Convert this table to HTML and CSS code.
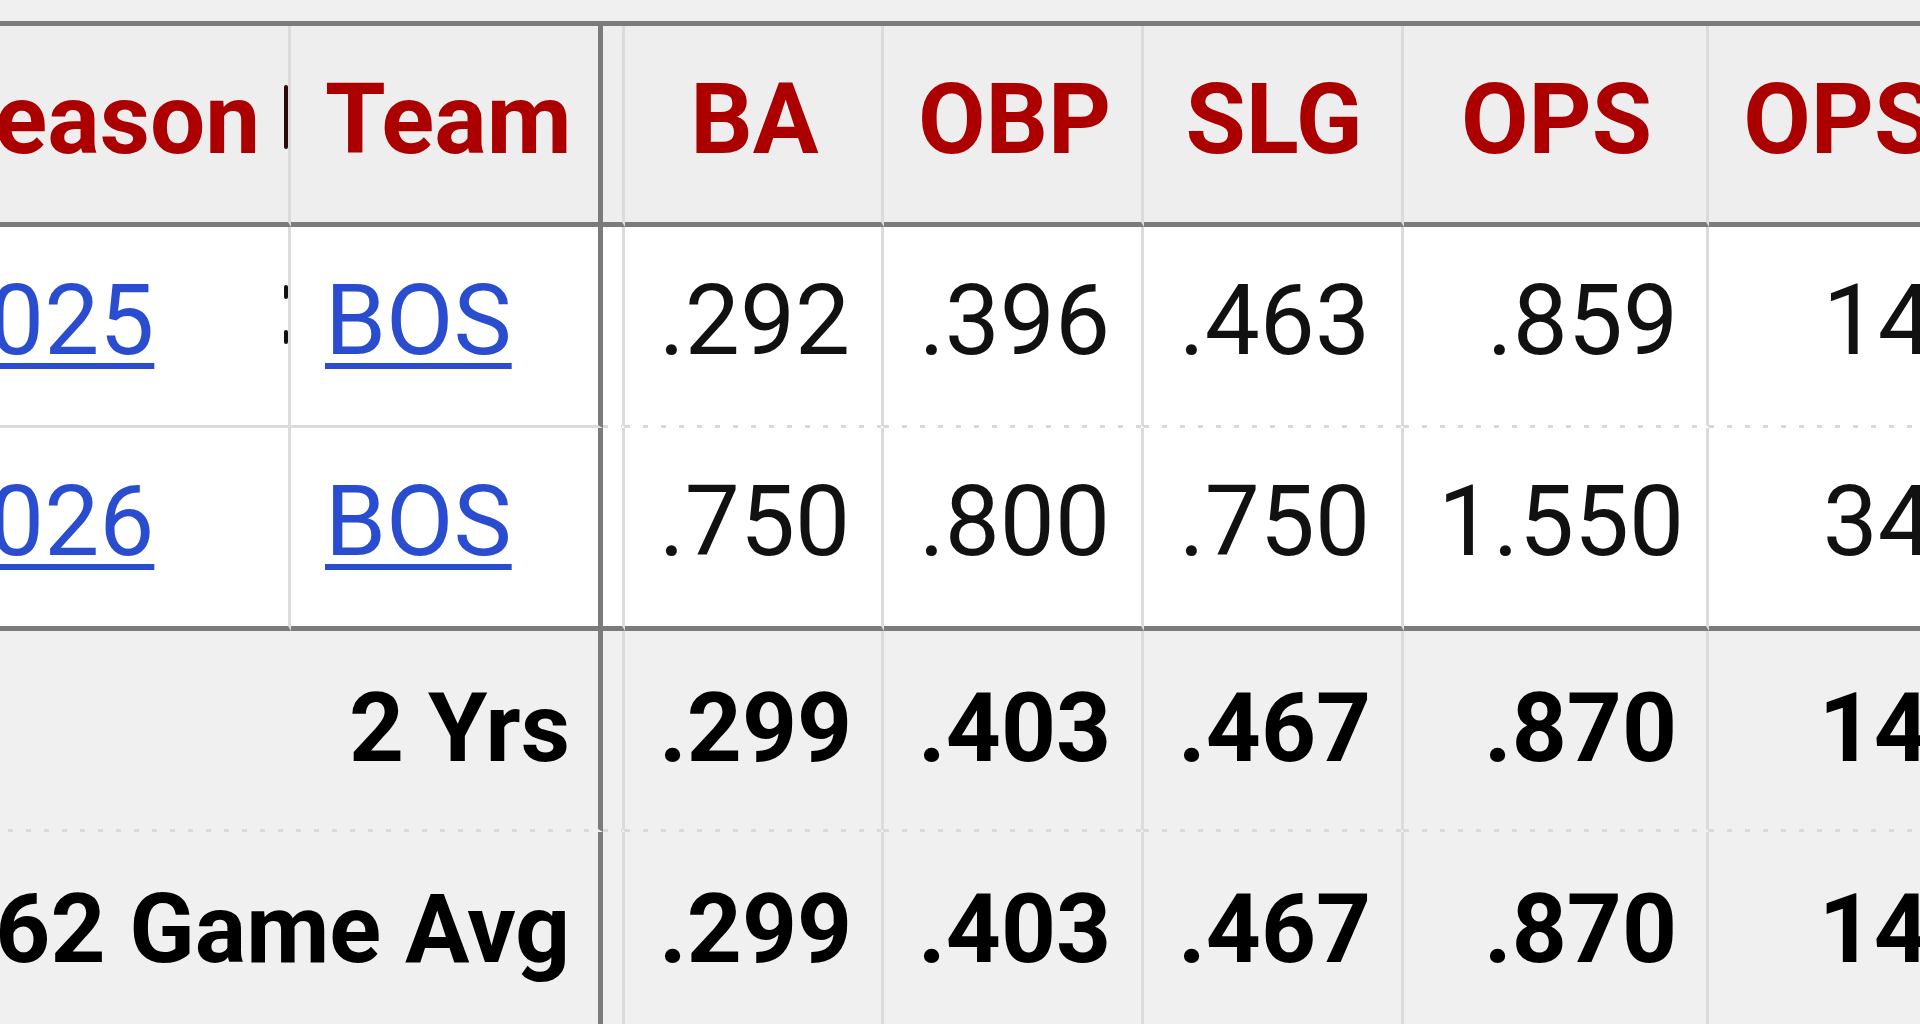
FILE: index.html
```html
<!DOCTYPE html>
<html lang="en">
<head>
    <meta charset="UTF-8">
    <meta name="viewport" content="width=device-width, initial-scale=1.0">
    <title>Standard Batting</title>
    <link rel="stylesheet" href="styles.css">
</head>
<body>
    <div class="scroller">
        <table class="stats">
            <colgroup>
                <col class="c-season">
                <col class="c-team">
                <col class="c-gap">
                <col class="c-ba">
                <col class="c-obp">
                <col class="c-slg">
                <col class="c-ops">
                <col class="c-opsplus">
            </colgroup>
            <thead>
                <tr>
                    <th class="left season">Season<span class="peek peek-head"></span></th>
                    <th class="left team">Team</th>
                    <th class="gap"></th>
                    <th>BA</th>
                    <th>OBP</th>
                    <th>SLG</th>
                    <th>OPS</th>
                    <th>OPS+</th>
                </tr>
            </thead>
            <tbody>
                <tr>
                    <td class="left season"><a href="#">2025</a><span class="peek peek-dot top"></span><span class="peek peek-dot bottom"></span></td>
                    <td class="left team"><a href="#">BOS</a></td>
                    <td class="gap"></td>
                    <td>.292</td>
                    <td>.396</td>
                    <td>.463</td>
                    <td class="ops">.859</td>
                    <td>142</td>
                </tr>
                <tr class="last">
                    <td class="left season"><a href="#">2026</a></td>
                    <td class="left team"><a href="#">BOS</a></td>
                    <td class="gap"></td>
                    <td>.750</td>
                    <td>.800</td>
                    <td>.750</td>
                    <td class="ops">1.550</td>
                    <td>343</td>
                </tr>
            </tbody>
            <tfoot>
                <tr>
                    <th class="label" colspan="2">2 Yrs</th>
                    <td class="gap"></td>
                    <td>.299</td>
                    <td>.403</td>
                    <td>.467</td>
                    <td class="ops">.870</td>
                    <td>145</td>
                </tr>
                <tr class="avg">
                    <th class="label" colspan="2">162 Game Avg</th>
                    <td class="gap"></td>
                    <td>.299</td>
                    <td>.403</td>
                    <td>.467</td>
                    <td class="ops">.870</td>
                    <td>145</td>
                </tr>
            </tfoot>
        </table>
    </div>
</body>
</html>
```

FILE: styles.css
```css
body {
    margin: 0;
    background-color: #f1f0f1;
    font-family: Roboto, "Liberation Sans", sans-serif;
    color: #111;
    overflow: hidden;
}
.scroller {
    padding-top: 21px;
    margin-left: -100px;
    width: 2122px;
}
.stats {
    width: 2122px;
    table-layout: fixed;
    border-collapse: separate;
    border-spacing: 0;
    border-top: 5px solid #7b7b7b;
    font-size: 98px;
    line-height: 112px;
}
.c-season { width: 391px; }
.c-team { width: 312px; }
.c-gap { width: 22px; }
.c-ba { width: 259px; }
.c-obp { width: 260px; }
.c-slg { width: 260px; }
.c-ops { width: 305px; }
.c-opsplus { width: 313px; }

.stats th,
.stats td {
    padding: 38px 31px 48px 34px;
    text-align: right;
    white-space: nowrap;
    overflow: hidden;
    border-right: 3px solid #dcdbdc;
}
.stats .left {
    text-align: left;
}
.stats .ops {
    padding-right: 28px;
}
.stats .team,
.stats .label {
    border-right: 5px solid #7b7b7b;
}
.stats .gap {
    padding: 0;
}
.stats .season {
    position: relative;
    overflow: visible;
}

/* header */
.stats thead th {
    background-color: #efeeef;
    color: #ac0000;
    font-weight: bold;
    text-align: center;
    padding-bottom: 46px;
    border-bottom: 5px solid #7b7b7b;
}
.stats thead th.left {
    text-align: left;
}

/* body rows */
.stats tbody td {
    background-color: #fff;
    color: #111;
    border-bottom: 3px solid transparent;
    background-image: linear-gradient(to right, #d9d9d9 5px, transparent 5px);
    background-size: 18px 3px;
    background-repeat: repeat-x;
    background-position: left bottom;
    background-origin: border-box;
}
.stats tbody td.left {
    background-image: none;
    border-bottom-color: #dcdbdc;
}
.stats tbody tr.last td {
    background-image: none;
    border-bottom: 5px solid #7b7b7b;
}
.stats a {
    color: #2a4dd0;
    text-decoration: underline;
    text-decoration-thickness: 6px;
    text-underline-offset: 9px;
}

/* totals */
.stats tfoot th,
.stats tfoot td {
    background-color: #f1f0f1;
    color: #000;
    font-size: 96px;
    font-weight: bold;
    padding-top: 41px;
    padding-right: 35px;
    padding-bottom: 45px;
    border-bottom: 3px solid transparent;
    background-image: linear-gradient(to right, #d9d9d9 5px, transparent 5px);
    background-size: 18px 3px;
    background-repeat: repeat-x;
    background-position: left bottom;
    background-origin: border-box;
}
.stats tfoot .ops {
    padding-right: 29px;
}
.stats tfoot .label {
    padding-right: 28px;
}
.stats tfoot tr.avg th,
.stats tfoot tr.avg td {
    background-image: none;
    border-bottom: 0;
}
.stats tfoot .gap {
    padding: 0;
}

/* clipped glyph edges of the hidden column */
.peek {
    position: absolute;
    left: 384px;
    width: 4px;
    background-color: #2a0a0a;
    border-radius: 2px;
}
.peek-head {
    top: 59px;
    height: 64px;
}
.peek-dot {
    height: 14px;
    background-color: #111;
}
.peek-dot.top {
    top: 58px;
}
.peek-dot.bottom {
    top: 103px;
}
```
